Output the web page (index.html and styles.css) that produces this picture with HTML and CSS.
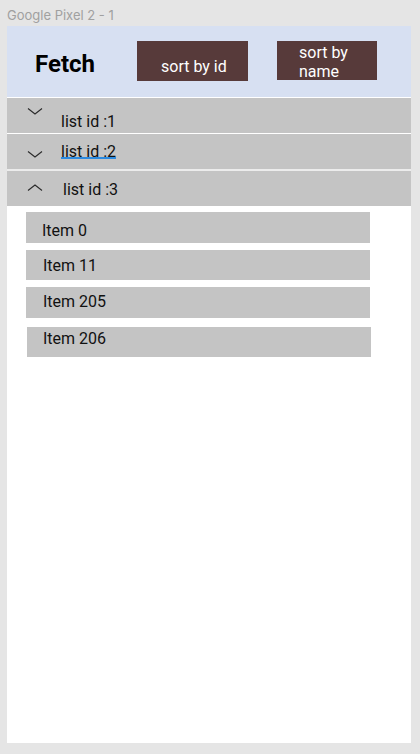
FILE: index.html
```html
<!DOCTYPE html>
<html lang="en">
<head>
<meta charset="utf-8">
<title>Google Pixel 2 - 1</title>
<link rel="stylesheet" href="styles.css">
</head>
<body>
<div class="label">Google Pixel 2 - 1</div>
<div class="frame">
  <header class="topbar">
    <h1 class="title">Fetch</h1>
    <div class="btn btn-id" role="button">sort by id</div>
    <div class="btn btn-name" role="button">sort by name</div>
  </header>
  <section class="groups">
    <div class="group g1">
      <svg class="chev c1" width="16" height="8" viewBox="0 0 16 8"><path d="M1 1.5 L8 7 L15 1.5" fill="none" stroke="#2a2a2a" stroke-width="1.1"/></svg>
      <span class="gtext t1">list id :1</span>
    </div>
    <div class="group g2">
      <svg class="chev c2" width="16" height="8" viewBox="0 0 16 8"><path d="M1 1.5 L8 7 L15 1.5" fill="none" stroke="#2a2a2a" stroke-width="1.1"/></svg>
      <span class="gtext t2 link">list id :2</span>
    </div>
    <div class="group g3">
      <svg class="chev c3" width="16" height="8" viewBox="0 0 16 8"><path d="M1 6.5 L8 1 L15 6.5" fill="none" stroke="#2a2a2a" stroke-width="1.1"/></svg>
      <span class="gtext t3">list id :3</span>
    </div>
  </section>
  <ul class="items">
    <li class="item i1">Item 0</li>
    <li class="item i2">Item 11</li>
    <li class="item i3">Item 205</li>
    <li class="item i4">Item 206</li>
  </ul>
</div>
</body>
</html>
```
FILE: styles.css
```css
* { box-sizing: border-box; }

body {
  margin: 0;
  height: 754px;
  overflow: hidden;
  background: #e5e5e5;
  font-family: Roboto, "Liberation Sans", sans-serif;
}

.label {
  height: 26px;
  padding: 7px 0 0 7px;
  font: 13px/16px Inter, "Liberation Sans", sans-serif;
  color: #a0a0a0;
}

.frame {
  margin-left: 7px;
  width: 404px;
  height: 717px;
  background: #fff;
  display: flex;
  flex-direction: column;
}

.topbar {
  height: 71px;
  flex: none;
  background: #d7e0f2;
  display: flex;
  align-items: flex-start;
  padding-left: 28px;
}

.title {
  margin: 26px 0 0;
  width: 102px;
  font-size: 24px;
  line-height: 24px;
  font-weight: 700;
  color: #000;
}

.btn {
  margin-top: 15px;
  background: #573a3a;
  color: #fff;
  font-size: 16px;
  line-height: 19px;
}

.btn-id {
  width: 111px;
  height: 40px;
  padding: 16px 0 0 24px;
}

.btn-name {
  width: 100px;
  height: 39px;
  margin-left: 29px;
  padding: 3px 0 0 22px;
  line-height: 18.5px;
}

.groups {
  display: flex;
  flex-direction: column;
  flex: none;
}

.group {
  height: 35px;
  background: #c4c4c4;
  display: flex;
  align-items: flex-start;
  padding-left: 20px;
  font-size: 16px;
  line-height: 19px;
  color: #111;
}

.g1 { margin-top: 1px; }
.g2 { margin-top: 1px; }
.g3 { height: 37px; border-top: 2px solid #ececec; }

.chev { flex: none; display: block; }
.c1 { margin-top: 9px; }
.c2 { margin-top: 16px; }
.c3 { margin-top: 13px; }

.t1 { margin: 14px 0 0 18px; }
.t2 { margin: 8px 0 0 18px; }
.t3 { margin: 9px 0 0 20px; }

.link {
  text-decoration: underline;
  text-decoration-color: #2b8ae0;
  text-decoration-thickness: 2px;
  text-underline-offset: 0;
}

.items {
  list-style: none;
  margin: 6px 0 0 19px;
  padding: 0;
  display: flex;
  flex-direction: column;
}

.item {
  width: 344px;
  height: 31px;
  background: #c4c4c4;
  font-size: 16px;
  line-height: 19px;
  color: #111;
}

.i1 { padding: 9px 0 0 16px; }
.i2 { margin-top: 7px; height: 30px; padding: 6px 0 0 17px; }
.i3 { margin-top: 7px; padding: 5px 0 0 17px; }
.i4 { margin-top: 9px; margin-left: 1px; height: 30px; padding: 2px 0 0 16px; }
```
